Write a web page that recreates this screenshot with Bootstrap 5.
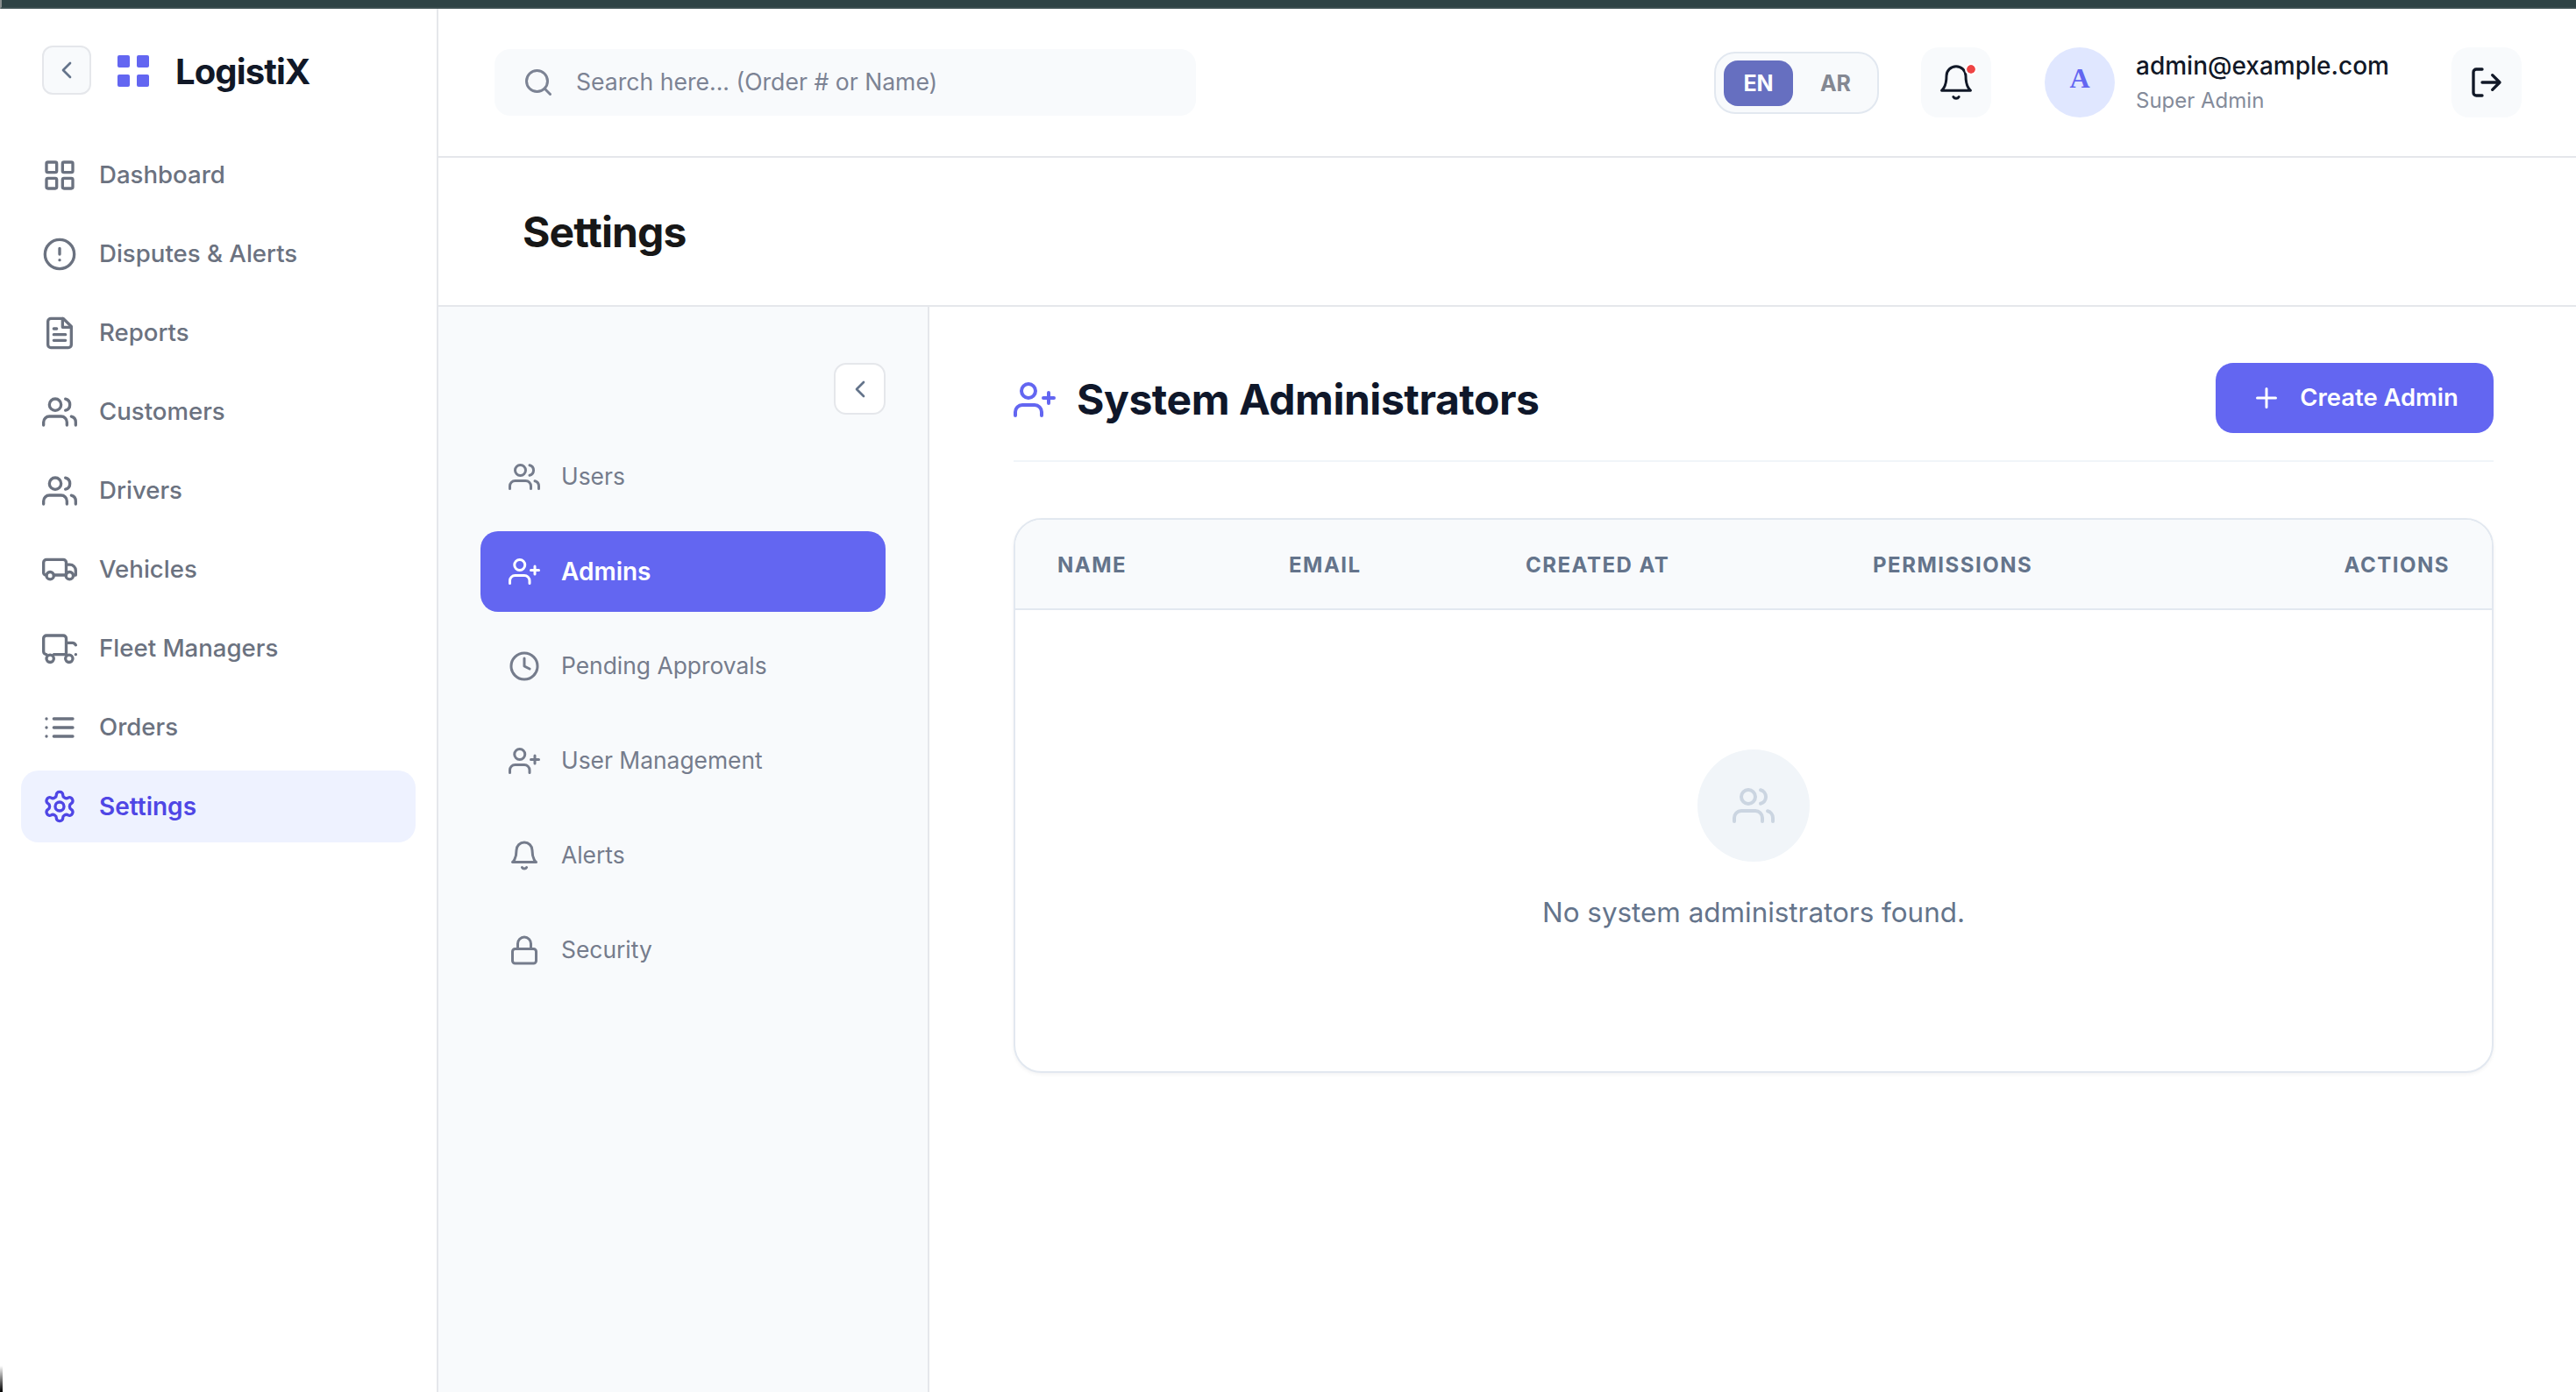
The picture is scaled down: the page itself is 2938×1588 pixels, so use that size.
<!DOCTYPE html>
<html lang="en">
<head>
<meta charset="utf-8">
<title>LogistiX Settings</title>
<link rel="stylesheet" href="https://cdn.jsdelivr.net/npm/bootstrap@5.3.0/dist/css/bootstrap.min.css">
<style>
html,body{height:100%;margin:0}
body{font-family:Inter,"Liberation Sans",sans-serif;background:#fff;overflow:hidden;color:#0f172a}
body::after{content:"";position:fixed;left:0;bottom:0;width:3px;height:30px;background:linear-gradient(to bottom,rgba(0,0,0,0),#000);pointer-events:none}
svg.ico{fill:none;stroke:currentColor;stroke-width:2;stroke-linecap:round;stroke-linejoin:round;flex:none;display:block}
.topstrip{height:10px;background:#2f4345;border-bottom:2px solid #3d4f51;border-left:2px solid #8a8f90;flex:none}
.shell{height:1578px}
.mainside{width:500px;flex:none;border-right:2px solid #e5e7eb;background:#fff}
.brandrow{height:116px;padding:42px 0 0 48px;gap:30px;box-sizing:content-box}
.sqbtn{width:56px;height:56px;border:2px solid #e5e7eb;background:#f8fafc;border-radius:12px;color:#64748b;padding:0}
.logogrid{display:grid;grid-template-columns:14px 14px;grid-auto-rows:14px;gap:8px}
.logogrid i{background:#6366f1;border-radius:2px;display:block}
.brandname{font-size:40px;font-weight:700;letter-spacing:-.9px;line-height:56px;color:#111827;margin-left:6px;padding-top:2px}
.mainnav{padding:0 24px;margin-top:-9px;gap:8px}
.navrow{height:82px;padding:0 24px;gap:25px;border-radius:20px;color:#6b7280;font-size:27.6px;font-weight:500;text-decoration:none}
.navrow.on{background:#eef2ff;color:#4f46e5;font-weight:600;font-size:28px}
.workarea{min-width:0}
.tophead{height:170px;border-bottom:2px solid #e5e7eb;padding:0 62px 0 64px;flex:none}
.searchbox{width:800px;height:76px;background:#f8fafc;border-radius:18px;color:#7c8394;padding:0 32px;gap:25px}
.searchtext{font-size:26.6px;font-weight:400;color:#7c8394}
.langwrap{width:188px;height:71px;border:2px solid #e2e8f0;border-radius:24px;background:#f8fafc;padding:8px 8px 8px 9px;margin-right:48px}
.langbtn{width:80px;height:52px;border-radius:16px;font-size:25px;font-weight:700;background:#666fc0;color:#fff;border:0;padding:0;line-height:52px;text-align:center}
.langoff{background:transparent;color:#848892;margin-left:9px}
.softbtn{width:80px;height:80px;border:0;border-radius:20px;background:#f8fafc;padding:0;color:#111827}
.softbtn svg.bellthin{stroke-width:1.6}
.belldot{position:absolute;top:20px;right:18px;width:10px;height:10px;border-radius:50%;background:#ef4444;outline:2px solid #fff}
.avatarcirc{width:80px;height:80px;border-radius:50%;background:#e0e7ff;color:#6366f1;font:700 32px "Liberation Serif",serif;margin-left:61px;padding-bottom:10px}
.useremail{font-size:28px;font-weight:500;line-height:36px;color:#111827;padding-top:2px}
.userrole{font-size:24px;line-height:36px;color:#848b9a;margin-top:4px}
.userblock{margin-left:24px;width:360px}
.titleband{height:170px;border-bottom:2px solid #e5e7eb;padding:2px 0 0 96px;flex:none}
.pagetitle{font-size:48px;font-weight:700;letter-spacing:-.9px;color:#171717;margin:0;line-height:64px}
.subside{width:560px;flex:none;background:#f8fafc;border-right:2px solid #e5e7eb;padding:64px 48px 0 48px}
.collapsebtn{width:59px;height:59px;background:#fff;border:2px solid #e5e7eb;border-radius:14px;color:#64748b;padding:0}
.subnav{gap:16px;margin-top:25px}
.subrow{height:92px;padding:0 32px;gap:24px;border-radius:20px;color:#757c8c;font-size:26.4px;text-decoration:none;font-weight:400}
.subrow.on{background:#6366f1;color:#fff;font-weight:600;font-size:28px}
.contentpane{padding:64px 94px 0 96px;min-width:0}
.sectionhead{height:113px;border-bottom:2px solid #f1f5f9;padding-bottom:33px}
.sectionleft{padding-top:10px}
.sectionicon{color:#6366f1}
.sectiontitle{font-size:48px;font-weight:700;letter-spacing:-.45px;line-height:64px;color:#0f172a;margin:0}
.createbtn{width:317px;height:80px;border-radius:20px;background:#6366f1;color:#fff;border:0;font-size:27.4px;font-weight:600;gap:20px;padding:0}
.tablecard{margin-top:64px;height:633px;border:2px solid #e2e8f0;border-radius:32px;box-shadow:0 2px 4px rgba(15,23,42,.05);overflow:hidden;background:#fff}
.admintable{table-layout:fixed;width:1684px;margin:0}
.c1{width:264px}.c2{width:270px}.c3{width:396px}.c4{width:500px}.c5{width:254px}
.admintable th{background:#f8fafc;border-bottom:2px solid #e2e8f0;height:102px;padding:3px 48px 0;font-size:24px;font-weight:700;letter-spacing:1.5px;color:#64748b;vertical-align:middle;white-space:nowrap}
.admintable td{border:0;padding:159px 0;text-align:center}
.emptycirc{width:128px;height:128px;border-radius:50%;background:#f1f5f9;color:#cbd5e1;margin:0 auto 34px}
.emptytext{font-size:31.4px;line-height:48px;color:#64748b;margin:0}
</style>
</head>
<body class="d-flex flex-column">
<div class="topstrip"></div>
<div class="shell d-flex">
  <aside class="mainside d-flex flex-column">
    <div class="brandrow d-flex align-items-start">
      <button class="sqbtn d-flex align-items-center justify-content-center" type="button" aria-label="Collapse"><svg class="ico" width="32" height="32" viewBox="0 0 24 24"><path d="m15 18-6-6 6-6"/></svg></button>
      <div class="d-flex align-items-center gap-4">
        <div class="logogrid"><i></i><i></i><i></i><i></i></div>
        <span class="brandname">LogistiX</span>
      </div>
    </div>
    <nav class="mainnav d-flex flex-column">
      <a class="navrow d-flex align-items-center" href="#"><svg class="ico" width="40" height="40" viewBox="0 0 24 24"><rect x="3" y="3" width="7" height="7" rx="1"/><rect x="14" y="3" width="7" height="7" rx="1"/><rect x="14" y="14" width="7" height="7" rx="1"/><rect x="3" y="14" width="7" height="7" rx="1"/></svg>Dashboard</a>
      <a class="navrow d-flex align-items-center" href="#"><svg class="ico" width="40" height="40" viewBox="0 0 24 24"><circle cx="12" cy="12" r="10"/><path d="M12 8v4M12 16h.01"/></svg>Disputes &amp; Alerts</a>
      <a class="navrow d-flex align-items-center" href="#"><svg class="ico" width="40" height="40" viewBox="0 0 24 24"><path d="M14.500 2H6a2 2 0 0 0-2 2v16a2 2 0 0 0 2 2h12a2 2 0 0 0 2-2V7.500z"/><path d="M14 2v6h6M16 13H8M16 17H8M10 9H8"/></svg>Reports</a>
      <a class="navrow d-flex align-items-center" href="#"><svg class="ico" width="40" height="40" viewBox="0 0 24 24"><path d="M17 21v-2a4 4 0 0 0-4-4H5a4 4 0 0 0-4 4v2"/><circle cx="9" cy="7" r="4"/><path d="M23 21v-2a4 4 0 0 0-3-3.870M16 3.130a4 4 0 0 1 0 7.750"/></svg>Customers</a>
      <a class="navrow d-flex align-items-center" href="#"><svg class="ico" width="40" height="40" viewBox="0 0 24 24"><path d="M17 21v-2a4 4 0 0 0-4-4H5a4 4 0 0 0-4 4v2"/><circle cx="9" cy="7" r="4"/><path d="M23 21v-2a4 4 0 0 0-3-3.870M16 3.130a4 4 0 0 1 0 7.750"/></svg>Drivers</a>
      <a class="navrow d-flex align-items-center" href="#"><svg class="ico" width="40" height="40" viewBox="0 0 24 24"><path d="M3 15.600H2.500A1.500 1.500 0 0 1 1 14V7a2 2 0 0 1 2-2h11.500a2 2 0 0 1 2 2v8.600M8 15.600h8.500"/><path d="M16.500 8.500H19a4 4 0 0 1 4 4v3.100h-1.700"/><circle cx="5.500" cy="16" r="2.500"/><circle cx="18.800" cy="16" r="2.500"/></svg>Vehicles</a>
      <a class="navrow d-flex align-items-center" href="#"><svg class="ico" width="40" height="40" viewBox="0 0 24 24"><path d="M3 16H3a2 2 0 0 1-2-2V5a2 2 0 0 1 2-2h11.500a2 2 0 0 1 2 2v11M8 16h8.500M16.500 8h4a2.500 2.500 0 0 1 2.500 1.500M23 16h.01"/><circle cx="5.500" cy="18.800" r="2.500"/><circle cx="18.500" cy="18.800" r="2.500"/></svg>Fleet Managers</a>
      <a class="navrow d-flex align-items-center" href="#"><svg class="ico" width="40" height="40" viewBox="0 0 24 24"><path d="M8 6h13M8 12h13M8 18h13M3 6h.01M3 12h.01M3 18h.01"/></svg>Orders</a>
      <a class="navrow on d-flex align-items-center" href="#"><svg class="ico" width="40" height="40" viewBox="0 0 24 24"><path d="M12.220 2h-.44a2 2 0 0 0-2 2v.18a2 2 0 0 1-1 1.730l-.43.25a2 2 0 0 1-2 0l-.15-.08a2 2 0 0 0-2.730.73l-.22.38a2 2 0 0 0 .73 2.730l.15.1a2 2 0 0 1 1 1.720v.51a2 2 0 0 1-1 1.740l-.15.09a2 2 0 0 0-.73 2.730l.22.38a2 2 0 0 0 2.730.73l.15-.08a2 2 0 0 1 2 0l.43.25a2 2 0 0 1 1 1.730V20a2 2 0 0 0 2 2h.44a2 2 0 0 0 2-2v-.18a2 2 0 0 1 1-1.730l.43-.25a2 2 0 0 1 2 0l.15.08a2 2 0 0 0 2.730-.73l.22-.39a2 2 0 0 0-.73-2.730l-.15-.08a2 2 0 0 1-1-1.740v-.5a2 2 0 0 1 1-1.740l.15-.09a2 2 0 0 0 .73-2.730l-.22-.38a2 2 0 0 0-2.730-.73l-.15.08a2 2 0 0 1-2 0l-.43-.25a2 2 0 0 1-1-1.730V4a2 2 0 0 0-2-2z"/><circle cx="12" cy="12" r="3"/></svg>Settings</a>
    </nav>
  </aside>
  <div class="workarea flex-grow-1 d-flex flex-column">
    <header class="tophead d-flex align-items-center">
      <div class="searchbox d-flex align-items-center">
        <svg class="ico" width="36" height="36" viewBox="0 0 24 24"><circle cx="11" cy="11" r="8"/><path d="m21 21-4.300-4.300"/></svg>
        <span class="searchtext">Search here... (Order # or Name)</span>
      </div>
      <div class="flex-grow-1"></div>
      <div class="langwrap d-flex">
        <button class="langbtn" type="button">EN</button>
        <button class="langbtn langoff" type="button">AR</button>
      </div>
      <button class="softbtn position-relative d-flex align-items-center justify-content-center" type="button" aria-label="Notifications">
        <svg class="ico bellthin" width="44" height="44" viewBox="0 0 24 24"><path d="M18 8A6 6 0 0 0 6 8c0 7-3 9-3 9h18s-3-2-3-9"/><path d="M13.730 21a2 2 0 0 1-3.460 0"/></svg>
        <span class="belldot"></span>
      </button>
      <div class="avatarcirc d-flex align-items-center justify-content-center">A</div>
      <div class="userblock">
        <div class="useremail">admin@example.com</div>
        <div class="userrole">Super Admin</div>
      </div>
      <button class="softbtn d-flex align-items-center justify-content-center" type="button" aria-label="Log out">
        <svg class="ico" width="40" height="40" viewBox="0 0 24 24"><path d="M9 21H5a2 2 0 0 1-2-2V5a2 2 0 0 1 2-2h4"/><path d="m16 17 5-5-5-5M21 12H9"/></svg>
      </button>
    </header>
    <div class="titleband d-flex align-items-center"><h1 class="pagetitle">Settings</h1></div>
    <div class="flex-grow-1 d-flex">
      <aside class="subside">
        <div class="d-flex justify-content-end"><button class="collapsebtn d-flex align-items-center justify-content-center" type="button" aria-label="Collapse"><svg class="ico" width="32" height="32" viewBox="0 0 24 24"><path d="m15 18-6-6 6-6"/></svg></button></div>
        <nav class="subnav d-flex flex-column">
          <a class="subrow d-flex align-items-center" href="#"><svg class="ico" width="36" height="36" viewBox="0 0 24 24"><path d="M17 21v-2a4 4 0 0 0-4-4H5a4 4 0 0 0-4 4v2"/><circle cx="9" cy="7" r="4"/><path d="M23 21v-2a4 4 0 0 0-3-3.870M16 3.130a4 4 0 0 1 0 7.750"/></svg>Users</a>
          <a class="subrow on d-flex align-items-center" href="#"><svg class="ico" width="36" height="36" viewBox="0 0 24 24"><path d="M16 21v-2a4 4 0 0 0-4-4H5a4 4 0 0 0-4 4v2"/><circle cx="8.500" cy="7" r="4"/><path d="M20 8v6M23 11h-6"/></svg>Admins</a>
          <a class="subrow d-flex align-items-center" href="#"><svg class="ico" width="36" height="36" viewBox="0 0 24 24"><circle cx="12" cy="12" r="10"/><path d="M12 6v6l4 2"/></svg>Pending Approvals</a>
          <a class="subrow d-flex align-items-center" href="#"><svg class="ico" width="36" height="36" viewBox="0 0 24 24"><path d="M16 21v-2a4 4 0 0 0-4-4H5a4 4 0 0 0-4 4v2"/><circle cx="8.500" cy="7" r="4"/><path d="M20 8v6M23 11h-6"/></svg>User Management</a>
          <a class="subrow d-flex align-items-center" href="#"><svg class="ico" width="36" height="36" viewBox="0 0 24 24"><path d="M18 8A6 6 0 0 0 6 8c0 7-3 9-3 9h18s-3-2-3-9"/><path d="M13.730 21a2 2 0 0 1-3.460 0"/></svg>Alerts</a>
          <a class="subrow d-flex align-items-center" href="#"><svg class="ico" width="36" height="36" viewBox="0 0 24 24"><rect x="3" y="11" width="18" height="11" rx="2"/><path d="M7 11V7a5 5 0 0 1 10 0v4"/></svg>Security</a>
        </nav>
      </aside>
      <main class="contentpane flex-grow-1">
        <div class="sectionhead d-flex justify-content-between align-items-start">
          <div class="sectionleft d-flex align-items-center gap-4">
            <svg class="ico sectionicon" width="48" height="48" viewBox="0 0 24 24"><path d="M16 21v-2a4 4 0 0 0-4-4H5a4 4 0 0 0-4 4v2"/><circle cx="8.500" cy="7" r="4"/><path d="M20 8v6M23 11h-6"/></svg>
            <h2 class="sectiontitle">System Administrators</h2>
          </div>
          <button class="createbtn d-flex align-items-center justify-content-center" type="button"><svg class="ico" width="36" height="36" viewBox="0 0 24 24"><path d="M5 12h14M12 5v14"/></svg>Create Admin</button>
        </div>
        <div class="tablecard">
          <table class="table admintable">
            <colgroup><col class="c1"><col class="c2"><col class="c3"><col class="c4"><col class="c5"></colgroup>
            <thead><tr><th>NAME</th><th>EMAIL</th><th>CREATED AT</th><th>PERMISSIONS</th><th class="text-end">ACTIONS</th></tr></thead>
            <tbody><tr><td colspan="5">
              <div class="emptycirc d-flex align-items-center justify-content-center"><svg class="ico" width="48" height="48" viewBox="0 0 24 24"><path d="M17 21v-2a4 4 0 0 0-4-4H5a4 4 0 0 0-4 4v2"/><circle cx="9" cy="7" r="4"/><path d="M23 21v-2a4 4 0 0 0-3-3.870M16 3.130a4 4 0 0 1 0 7.750"/></svg></div>
              <p class="emptytext">No system administrators found.</p>
            </td></tr></tbody>
          </table>
        </div>
      </main>
    </div>
  </div>
</div>
<script src="https://cdn.jsdelivr.net/npm/bootstrap@5.3.0/dist/js/bootstrap.bundle.min.js"></script>
</body>
</html>
